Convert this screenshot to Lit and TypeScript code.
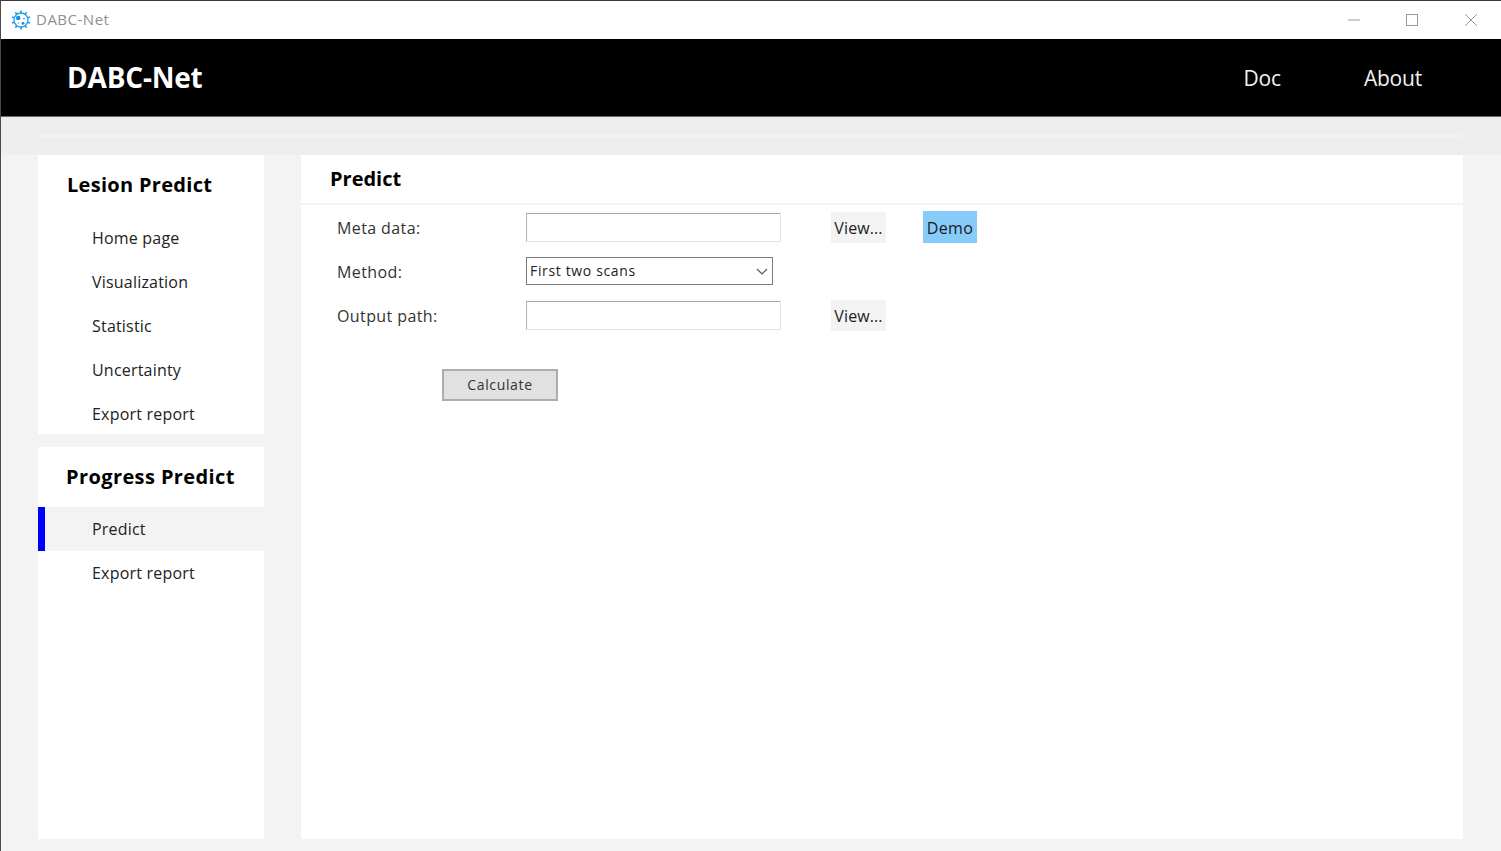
import { LitElement, html, css, svg } from "lit";
import { customElement } from "lit/decorators.js";

const gear = () => {
  const teeth = Array.from({ length: 10 }, (_, i) => {
    const a = ((i * 36 - 90) * Math.PI) / 180;
    const x1 = 10 + 7 * Math.cos(a);
    const y1 = 10 + 7 * Math.sin(a);
    const x2 = 10 + 9.6 * Math.cos(a);
    const y2 = 10 + 9.6 * Math.sin(a);
    return svg`<line x1=${x1} y1=${y1} x2=${x2} y2=${y2} stroke="#2a9fe8" stroke-width="1.7"></line>`;
  });
  return html`<svg class="logo" viewBox="0 0 20 20" width="20" height="20">
    ${teeth}
    <circle cx="10" cy="10" r="7" fill="#fff" stroke="#2a9fe8" stroke-width="1.3"></circle>
    <circle cx="7.2" cy="8" r="2.3" fill="#1f8fdc"></circle>
    <circle cx="13" cy="8.6" r="0.9" fill="#2a9fe8"></circle>
    <circle cx="12" cy="13.2" r="1.5" fill="#1f8fdc"></circle>
    <circle cx="7.4" cy="13" r="0.7" fill="#2a9fe8"></circle>
  </svg>`;
};

@customElement("app-root")
export class AppRoot extends LitElement {
  static styles = css`
    :host {
      display: flex;
      flex-direction: column;
      width: 1501px;
      height: 851px;
      box-sizing: border-box;
      overflow: hidden;
      border-top: 1px solid #3c3c3c;
      border-left: 1px solid #4a4a4a;
      background: #f3f3f3;
      font-family: "Open Sans", "Noto Sans", sans-serif;
      color: #222;
    }
    .titlebar {
      height: 38px;
      flex: none;
      background: #fff;
      display: flex;
      align-items: center;
      padding-left: 10px;
      color: #8f8f8f;
      font-size: 15px;
      letter-spacing: 0.5px;
    }
    .logo { flex: none; margin-right: 5px; }
    .title { flex: 1; padding-bottom: 2px; }
    .winbtns { display: flex; align-items: center; padding-right: 1px; }
    .winbtn {
      width: 58.5px;
      height: 38px;
      display: flex;
      align-items: center;
      justify-content: center;
    }
    .winbtn svg { display: block; }
    .appbar {
      height: 77px;
      flex: none;
      background: #000;
      border-bottom: 1px solid #6a6a6a;
      display: flex;
      align-items: center;
      color: #fff;
      padding-left: 66px;
    }
    .brand { font-size: 28px; font-weight: 700; flex: 1; letter-spacing: -0.2px; padding-bottom: 2px; }
    .navlink { font-size: 21px; color: #f2f2f2; letter-spacing: -0.2px; }
    .navlink.doc { margin-right: 83px; }
    .navlink.about { margin-right: 79px; }
    .strip {
      height: 38px;
      flex: none;
      background: #eeeeee;
      padding: 18px 38px 0 37px;
      box-sizing: border-box;
    }
    .strip div { height: 2px; background: #f3f3f3; }
    .main {
      flex: 1;
      display: flex;
      gap: 37px;
      padding: 0 38px 12px 37px;
      min-height: 0;
    }
    .side {
      width: 226px;
      flex: none;
      display: flex;
      flex-direction: column;
      gap: 13px;
    }
    .card { background: #fff; }
    .card.grow { flex: 1; }
    .card.first { height: 279px; }
    .card-head {
      height: 60px;
      display: flex;
      align-items: center;
      padding-left: 29px;
      padding-bottom: 2px;
      box-sizing: border-box;
      font-size: 20px;
      font-weight: 700;
      letter-spacing: 0.3px;
      color: #000;
    }
    .card.first .card-head { height: 61px; }
    .card.second .card-head { padding-left: 28px; letter-spacing: 0.4px; }
    .item {
      height: 44px;
      display: flex;
      align-items: center;
      padding-left: 54px;
      font-size: 16px;
      letter-spacing: 0.2px;
      color: #222;
      box-sizing: border-box;
    }
    .item.active {
      background: #f3f3f3;
      border-left: 7px solid #0000ff;
      padding-left: 47px;
    }
    .content {
      flex: 1;
      background: #fff;
      display: flex;
      flex-direction: column;
    }
    .content-head {
      height: 50px;
      flex: none;
      box-sizing: border-box;
      display: flex;
      align-items: center;
      padding-left: 29px;
      padding-bottom: 2px;
      font-size: 20px;
      font-weight: 700;
      color: #000;
      border-bottom: 2px solid #f3f3f3;
    }
    .form {
      display: grid;
      grid-template-columns: 189px 255px 50px 55px 37px 54px;
      grid-auto-rows: 44px;
      align-items: center;
      justify-items: start;
      padding-left: 36px;
      font-size: 16px;
      letter-spacing: 0.4px;
    }
    .label { grid-column: 1; color: #333; padding-top: 2px; }
    .input {
      grid-column: 2;
      width: 100%;
      height: 29px;
      box-sizing: border-box;
      border: 1px solid #e4e4e4;
      border-top-color: #a8a8a8;
      border-left-color: #b4b4b4;
      background: #fff;
    }
    .select {
      grid-column: 2;
      width: 247px;
      height: 28px;
      box-sizing: border-box;
      border: 1px solid #7a7a7a;
      background: #fff;
      display: flex;
      align-items: center;
      justify-content: space-between;
      padding: 0 4px 0 3px;
      font-size: 14px;
      letter-spacing: 0.65px;
      color: #222;
    }
    .select span { padding-bottom: 1px; }
    .view {
      grid-column: 4;
      width: 55px;
      height: 31px;
      box-sizing: border-box;
      padding-top: 1px;
      background: #f3f3f3;
      display: flex;
      align-items: center;
      justify-content: center;
      color: #222;
      letter-spacing: 0.1px;
    }
    .demo {
      grid-column: 6;
      width: 54px;
      height: 32px;
      box-sizing: border-box;
      padding-top: 1px;
      background: #87cbfb;
      display: flex;
      align-items: center;
      justify-content: center;
      color: #1a1a1a;
    }
    .calc {
      margin: 32px 0 0 141px;
      width: 116px;
      height: 32px;
      box-sizing: border-box;
      background: #e1e1e1;
      border: 2px solid #adadad;
      display: flex;
      align-items: center;
      justify-content: center;
      padding-bottom: 2px;
      font-size: 14px;
      letter-spacing: 0.65px;
      color: #333;
    }
  `;

  render() {
    return html`
      <div class="titlebar">
        ${gear()}
        <span class="title">DABC-Net</span>
        <div class="winbtns">
          <div class="winbtn">
            <svg width="12" height="2" viewBox="0 0 12 2"><path d="M0 1H12" stroke="#9a9a9a" stroke-width="1"></path></svg>
          </div>
          <div class="winbtn">
            <svg width="12" height="12" viewBox="0 0 12 12"><rect x="0.5" y="0.5" width="11" height="11" fill="none" stroke="#9a9a9a"></rect></svg>
          </div>
          <div class="winbtn">
            <svg width="12" height="12" viewBox="0 0 12 12"><path d="M0 0L12 12M12 0L0 12" stroke="#9a9a9a" stroke-width="1" fill="none"></path></svg>
          </div>
        </div>
      </div>
      <div class="appbar">
        <span class="brand">DABC-Net</span>
        <span class="navlink doc">Doc</span>
        <span class="navlink about">About</span>
      </div>
      <div class="strip"><div></div></div>
      <div class="main">
        <div class="side">
          <div class="card first">
            <div class="card-head">Lesion Predict</div>
            <div class="item">Home page</div>
            <div class="item">Visualization</div>
            <div class="item">Statistic</div>
            <div class="item">Uncertainty</div>
            <div class="item">Export report</div>
          </div>
          <div class="card second grow">
            <div class="card-head">Progress Predict</div>
            <div class="item active">Predict</div>
            <div class="item">Export report</div>
          </div>
        </div>
        <div class="content">
          <div class="content-head">Predict</div>
          <div class="form">
            <span class="label">Meta data:</span>
            <div class="input"></div>
            <div class="view">View...</div>
            <div class="demo">Demo</div>
            <span class="label">Method:</span>
            <div class="select">
              <span>First two scans</span>
              <svg width="12" height="7" viewBox="0 0 12 7"><path d="M1 1L6 6L11 1" fill="none" stroke="#555" stroke-width="1.2"></path></svg>
            </div>
            <span class="label">Output path:</span>
            <div class="input"></div>
            <div class="view">View...</div>
          </div>
          <div class="calc">Calculate</div>
        </div>
      </div>
    `;
  }
}
